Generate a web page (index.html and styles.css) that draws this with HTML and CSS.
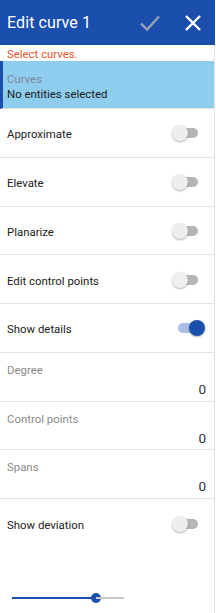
FILE: index.html
```html
<!DOCTYPE html>
<html>
<head>
<meta charset="utf-8">
<link rel="stylesheet" href="styles.css">
</head>
<body>
<div class="panel">
  <header class="head">
    <span class="title">Edit curve 1</span>
    <div class="actions">
      <svg class="check" width="22" height="18" viewBox="0 0 22 18"><path d="M2 9.5 L8 15.5 L20 2.5" fill="none" stroke="#9aa3b8" stroke-width="2.4"/></svg>
      <svg class="close" width="18" height="18" viewBox="0 0 18 18"><path d="M2 2 L16 16 M16 2 L2 16" fill="none" stroke="#ffffff" stroke-width="2.4"/></svg>
    </div>
  </header>
  <div class="body">
    <div class="error">Select curves.</div>
    <div class="select">
      <div class="sel-label">Curves</div>
      <div class="sel-value">No entities selected</div>
    </div>
    <div class="row"><span>Approximate</span><span class="toggle"></span></div>
    <div class="row"><span>Elevate</span><span class="toggle"></span></div>
    <div class="row"><span>Planarize</span><span class="toggle"></span></div>
    <div class="row"><span>Edit control points</span><span class="toggle"></span></div>
    <div class="row"><span>Show details</span><span class="toggle on"></span></div>
    <div class="detail"><div class="d-label">Degree</div><div class="d-value">0</div></div>
    <div class="detail"><div class="d-label">Control points</div><div class="d-value">0</div></div>
    <div class="detail"><div class="d-label">Spans</div><div class="d-value">0</div></div>
    <div class="row last"><span>Show deviation</span><span class="toggle"></span></div>
    <div class="slider-area">
      <div class="slider">
        <div class="fill" style="width:84px"></div>
        <div class="knob"></div>
        <div class="rest"></div>
      </div>
    </div>
  </div>
</div>
</body>
</html>
```
FILE: styles.css
```css
* { box-sizing: border-box; }
html, body { margin: 0; padding: 0; background: #ffffff; }
body { font-family: Roboto, "Liberation Sans", sans-serif; }
.panel { width: 215px; height: 613px; display: flex; flex-direction: column; }
.head {
  height: 45px; background: #1a4fae; display: flex; align-items: center;
  justify-content: space-between; padding: 0 13px 0 7px; flex-shrink: 0;
}
.title { color: #ffffff; font-size: 16px; letter-spacing: 0.1px; }
.actions { display: flex; align-items: center; gap: 23px; }
.check { display: block; margin-top: 1px; }
.close { display: block; }
.body { flex: 1; border-right: 1px solid #e4e4e4; display: flex; flex-direction: column; }
.error { color: #e8562d; font-size: 11.4px; height: 16px; line-height: 15px; padding: 2px 0 0 7px; }
.select {
  background: #8fcdef; border-left: 3px solid #1a4fae; height: 48px;
  padding: 11px 0 0 4px; font-size: 11.4px; line-height: 14px;
  border-bottom: 1px solid #e4e4e4;
}
.sel-label { color: #7d8a97; }
.sel-value { color: #1a1a1a; margin-top: 1px; }
.row {
  height: 48.75px; border-bottom: 1px solid #e4e4e4; display: flex;
  align-items: center; justify-content: space-between; padding: 0 15px 0 7px;
  font-size: 11.4px; color: #222222;
}
.row > span:first-child { margin-top: 3px; }
.row.last { border-bottom: none; height: 50px; padding-bottom: 1px; }
.toggle { position: relative; width: 27px; height: 16px; display: block; margin-top: 1px; }
.toggle::before {
  content: ""; position: absolute; left: 4px; right: 1px; top: 3px; height: 10px;
  border-radius: 5px; background: #b5b5b5;
}
.toggle::after {
  content: ""; position: absolute; left: 0; top: 0; width: 16px; height: 16px;
  border-radius: 50%; background: #eeeeee; box-shadow: 0 1px 2px rgba(0,0,0,0.3);
}
.toggle.on::before { background: #a9c0e6; left: 6px; right: -1px; }
.toggle.on::after { left: 17px; background: #1a4fae; }
.detail {
  height: 48.75px; border-bottom: 1px solid #e4e4e4; padding: 10px 8px 0 7px;
}
.d-label { font-size: 11.4px; color: #8a8a8a; line-height: 14px; }
.d-value { text-align: right; font-size: 13.5px; color: #333333; line-height: 16px; margin-top: 4px; }
.slider-area { flex: 1; display: flex; align-items: flex-end; padding: 0 0 10px 12px; }
.slider { display: flex; align-items: center; width: 112px; height: 10px; }
.fill { height: 2px; background: #1a4fae; }
.knob { width: 10px; height: 10px; border-radius: 50%; background: #1a4fae; margin-left: -5px; }
.rest { flex: 1; height: 2px; background: #c8c8c8; margin-left: -5px; }
```
